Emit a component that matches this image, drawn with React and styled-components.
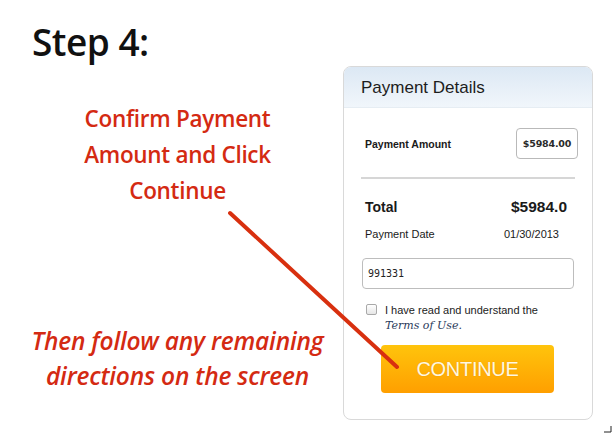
import React from "react";
import styled, { createGlobalStyle } from "styled-components";

const Global = createGlobalStyle`
  html, body { margin: 0; padding: 0; background: #fff; }
  body { width: 614px; height: 437px; overflow: hidden; }
  * { box-sizing: border-box; }
`;

const Page = styled.div`
  position: relative;
  width: 614px;
  height: 437px;
  display: flex;
  background: #fff;
`;

const Left = styled.div`
  width: 342px;
  display: flex;
  flex-direction: column;
`;

const StepTitle = styled.h1`
  margin: 18px 0 0 32px;
  font-family: "Open Sans", sans-serif;
  font-weight: 600;
  font-size: 37px;
  line-height: 48px;
  color: #111;
  letter-spacing: -0.5px;
`;

const Instruction = styled.p`
  margin: ${(p) => p.$mt}px 0 0 0;
  width: 355px;
  text-align: center;
  font-family: "Open Sans", sans-serif;
  font-weight: 600;
  font-style: ${(p) => (p.$italic ? "italic" : "normal")};
  font-size: ${(p) => p.$size}px;
  line-height: ${(p) => p.$lh}px;
  color: #d42a12;
  letter-spacing: ${(p) => p.$ls}px;
`;

const Right = styled.div`
  padding-top: 66px;
`;

const Card = styled.div`
  width: 250px;
  height: 354px;
  margin-left: 1px;
  border: 1px solid #d9d9d9;
  border-radius: 8px;
  overflow: hidden;
  background: #fff;
  font-family: "Liberation Sans", Arial, sans-serif;
`;

const CardHeader = styled.div`
  height: 41px;
  padding: 11px 0 0 17px;
  background: linear-gradient(#dce8f4, #f1f6fb);
  border-bottom: 1px solid #e6edf3;
  font-size: 17px;
  color: #1d1d1d;
`;

const CardBody = styled.div`
  padding: 20px 14px 0 17px;
`;

const Row = styled.div`
  display: flex;
  align-items: center;
  justify-content: space-between;
  padding-left: 4px;
  padding-right: ${(p) => p.$pr || 0}px;
  height: ${(p) => p.$h}px;
  margin-top: ${(p) => p.$mt || 0}px;
`;

const Label = styled.span`
  font-size: ${(p) => p.$size}px;
  font-weight: ${(p) => (p.$bold ? 700 : 400)};
  color: #1a1a1a;
`;

const Value = styled.span`
  font-size: ${(p) => p.$size}px;
  font-weight: ${(p) => (p.$bold ? 700 : 400)};
  color: #1a1a1a;
`;

const AmountBox = styled.div`
  width: 62px;
  height: 31px;
  border: 1px solid #b9b9b9;
  border-radius: 4px;
  display: flex;
  align-items: center;
  justify-content: center;
  font-family: "DejaVu Sans", sans-serif;
  font-size: 9.5px;
  font-weight: 700;
  color: #2a2a2a;
  letter-spacing: -0.2px;
`;

const Divider = styled.hr`
  margin: 18px 3px 0 0;
  border: 0;
  height: 2px;
  background: #d6d6d6;
`;

const CodeInput = styled.div`
  margin: 16px 4px 0 1px;
  height: 31px;
  border: 1px solid #bdbdbd;
  border-radius: 4px;
  padding-left: 5px;
  display: flex;
  align-items: center;
  font-family: "DejaVu Sans Mono", monospace;
  font-size: 10px;
  color: #222;
`;

const Agree = styled.div`
  display: flex;
  align-items: flex-start;
  margin-top: 13px;
  padding-left: 5px;
`;

const Check = styled.span`
  width: 11px;
  height: 11px;
  margin-top: 2px;
  margin-right: 8px;
  border: 1px solid #a9a9a9;
  border-radius: 2px;
  background: linear-gradient(#fff, #e6e6e6);
  flex-shrink: 0;
`;

const AgreeText = styled.div`
  font-size: 11px;
  line-height: 16px;
  color: #222;
`;

const Terms = styled.span`
  display: block;
  font-family: "DejaVu Serif", Georgia, serif;
  font-style: italic;
  font-size: 11px;
  color: #2b3b5c;
`;

const Button = styled.div`
  width: 173px;
  height: 48px;
  margin: 11px 0 0 20px;
  border-radius: 4px;
  background: linear-gradient(#ffc40c, #ff9f00);
  display: flex;
  align-items: center;
  justify-content: center;
  font-family: "Liberation Sans", Arial, sans-serif;
  font-size: 20px;
  color: #fff8e0;
  text-shadow: 0 0 1px rgba(180, 90, 0, 0.4);
  letter-spacing: -0.3px;
`;

const Pointer = styled.svg`
  position: absolute;
  left: 0;
  top: 0;
  pointer-events: none;
`;

export default function App() {
  return (
    <Page>
      <Global />
      <Left>
        <StepTitle>Step 4:</StepTitle>
        <Instruction $mt={35} $lh={36} $size={22.5} $ls={-0.3}>
          Confirm Payment
          <br />
          Amount and Click
          <br />
          Continue
        </Instruction>
        <Instruction $mt={114} $lh={35} $size={24.5} $ls={-0.2} $italic>
          Then follow any remaining
          <br />
          directions on the screen
        </Instruction>
      </Left>
      <Right>
        <Card>
          <CardHeader>Payment Details</CardHeader>
          <CardBody>
            <Row $h={31}>
              <Label $size={10.5} $bold>Payment Amount</Label>
              <AmountBox>$5984.00</AmountBox>
            </Row>
            <Divider />
            <Row $h={20} $mt={18} $pr={11}>
              <Label $size={14} $bold>Total</Label>
              <Value $size={15.5} $bold>$5984.0</Value>
            </Row>
            <Row $h={16} $mt={9} $pr={19}>
              <Label $size={11}>Payment Date</Label>
              <Value $size={11}>01/30/2013</Value>
            </Row>
            <CodeInput>991331</CodeInput>
            <Agree>
              <Check />
              <AgreeText>
                I have read and understand the
                <Terms>Terms of Use.</Terms>
              </AgreeText>
            </Agree>
            <Button>CONTINUE</Button>
          </CardBody>
        </Card>
      </Right>
      <Pointer width="614" height="437" viewBox="0 0 614 437">
        <line x1="230" y1="213" x2="397" y2="367" stroke="#d8300f" strokeWidth="4" strokeLinecap="round" />
        <path d="M604 432 H611 V426" fill="none" stroke="#222" strokeWidth="1" />
      </Pointer>
    </Page>
  );
}
